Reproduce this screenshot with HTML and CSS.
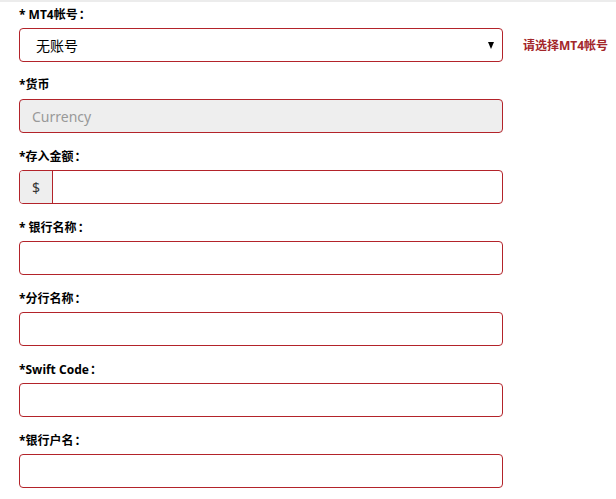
FILE: index.html
```html
<!DOCTYPE html>
<html lang="zh">
<head>
<meta charset="utf-8">
<link rel="stylesheet" href="styles.css">
</head>
<body>
<div class="page">
  <form class="form">
    <div class="group">
      <label class="label">* MT4帐号<span class="colon">：</span></label>
      <div class="row">
        <div class="control select">
          <span class="value">无账号</span>
          <span class="caret"></span>
        </div>
        <span class="error">请选择MT4帐号</span>
      </div>
    </div>
    <div class="group">
      <label class="label">*货币</label>
      <div class="control disabled"><span class="placeholder">Currency</span></div>
    </div>
    <div class="group">
      <label class="label">*存入金额<span class="colon">：</span></label>
      <div class="control addon-group">
        <span class="addon">$</span>
        <span class="addon-input"></span>
      </div>
    </div>
    <div class="group">
      <label class="label">* 银行名称<span class="colon">：</span></label>
      <div class="control"></div>
    </div>
    <div class="group">
      <label class="label">*分行名称<span class="colon">：</span></label>
      <div class="control"></div>
    </div>
    <div class="group">
      <label class="label">*Swift Code<span class="colon">：</span></label>
      <div class="control"></div>
    </div>
    <div class="group">
      <label class="label">*银行户名<span class="colon">：</span></label>
      <div class="control"></div>
    </div>
  </form>
</div>
</body>
</html>
```
FILE: styles.css
```css
* { box-sizing: border-box; }
html, body { margin: 0; padding: 0; background: #fff; }
body {
  font-family: "Noto Sans", "Noto Sans CJK SC", sans-serif;
  color: #000;
}
.page {
  border-top: 2px solid #ececec;
  padding: 3px 0 0 19px;
}
.form { display: flex; flex-direction: column; }
.group { display: flex; flex-direction: column; margin-bottom: 14px; }
.label {
  font-size: 12px;
  font-weight: 700;
  line-height: 17px;
  height: 17px;
  margin-bottom: 6px;
  font-family: "Noto Sans", "Noto Sans CJK SC", sans-serif;
}
.colon { font-family: "Noto Sans CJK JP", sans-serif; margin-left: 1px; }
.row { display: flex; align-items: center; }
.control {
  width: 484px;
  height: 34px;
  border: 1px solid #b3232a;
  border-radius: 4px;
  background: #fff;
  display: flex;
  align-items: center;
  font-size: 14px;
}
.select { padding: 0 8px 0 16px; justify-content: space-between; }
.value { font-size: 14px; color: #000; }
.caret {
  width: 0; height: 0;
  border-left: 3.5px solid transparent;
  border-right: 3.5px solid transparent;
  border-top: 7px solid #000;
  margin-top: 1px;
}
.error {
  margin-left: 20px;
  font-size: 12px;
  font-weight: 700;
  color: #a3262a;
  white-space: nowrap;
}
.disabled { background: #eeeeee; padding-left: 12px; }
.placeholder { color: #999; font-size: 14px; }
.addon-group { overflow: hidden; }
.addon {
  width: 33px;
  height: 100%;
  background: #eeeeee;
  border-right: 1px solid #b3232a;
  display: flex;
  align-items: center;
  justify-content: center;
  font-size: 14px;
  color: #333;
}
.addon-input { flex: 1; }
```
